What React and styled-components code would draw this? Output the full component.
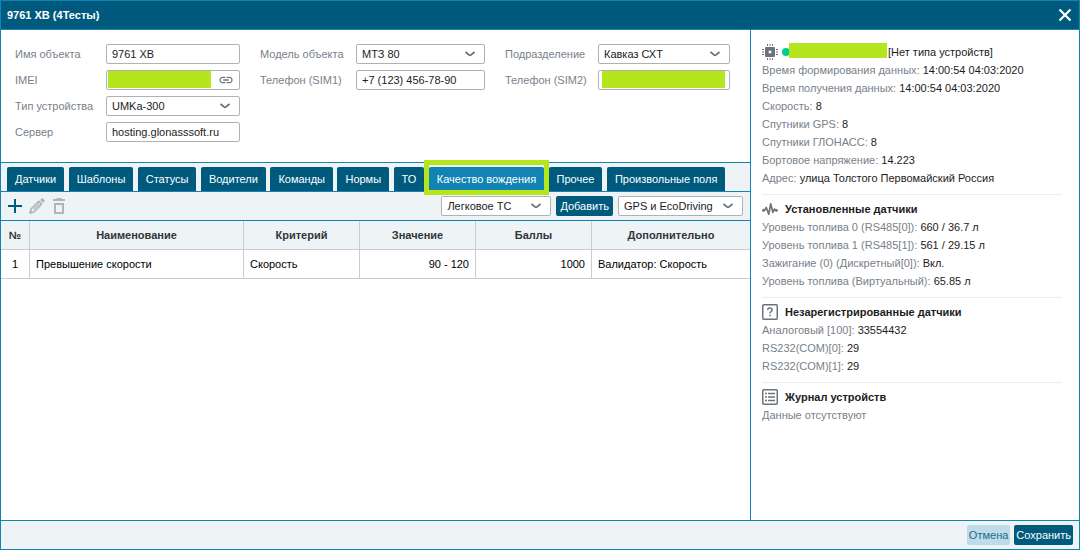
import React, { Fragment, useState } from "react"
import styled, { createGlobalStyle } from "styled-components"

const GlobalStyle = createGlobalStyle`
  * {
    box-sizing: border-box;
  }

  body {
    margin: 0;
    background: white;
    color: #1c1c1c;
    font-family: "Liberation Sans", Arial, sans-serif;
    font-size: 11px;
  }

  button,
  input,
  select {
    font: inherit;
    color: inherit;
  }
`

const Window = styled.div`
  display: flex;
  flex-direction: column;
  min-height: 100vh;
  border: 1px solid #1284b3;
`

const Header = styled.header`
  display: flex;
  align-items: center;
  justify-content: space-between;
  height: 29px;
  padding: 0 7px 0 6px;
  color: white;
  background: #005a7d;
  border-bottom: 1px solid #1284b3;
`

const Title = styled.h1`
  margin: 0;
  font-size: 11px;
  font-weight: bold;
`

const CloseButton = styled.button`
  display: flex;
  padding: 0;
  border: 0;
  background: none;
  color: white;
  cursor: pointer;
`

const Body = styled.div`
  display: flex;
  flex: 1;
`

const Main = styled.main`
  display: flex;
  flex-direction: column;
  flex: 1;
  min-width: 0;
`

const Form = styled.form`
  display: grid;
  grid-template-columns: 225fr 225fr 225fr;
  column-gap: 20px;
  padding: 14px 20px 20px 14px;
  border-bottom: 1px solid #1284b3;
`

const FormColumn = styled.div`
  display: flex;
  flex-direction: column;
  gap: 6px;
`

const FormRow = styled.div`
  display: flex;
  align-items: center;
`

const Label = styled.label`
  flex: none;
  width: ${props => props.$width}px;
  color: #78818a;
  white-space: nowrap;
`

const Field = styled.div`
  position: relative;
  display: flex;
  flex: ${props => (props.$width ? "none" : 1)};
  width: ${props => (props.$width ? props.$width + "px" : "auto")};
  min-width: 0;
  height: 20px;
  background: white;
  border: 1px solid #b1b1b3;
  border-radius: 2px;
`

const Input = styled.input`
  width: 100%;
  min-width: 0;
  padding: 0 5px;
  border: 0;
  outline: 0;
  background: none;
`

const Select = styled.select`
  width: 100%;
  padding: 0 22px 0 5px;
  border: 0;
  outline: 0;
  appearance: none;
  background: none;
`

const Chevron = styled.svg`
  position: absolute;
  top: 5px;
  right: 8px;
  pointer-events: none;
`

const LinkButton = styled.button`
  display: flex;
  align-items: center;
  flex: none;
  padding: 0 5px;
  border: 0;
  background: none;
  color: #6b747c;
  cursor: pointer;
`

const Mask = styled.span`
  position: absolute;
  top: 0;
  bottom: 1px;
  left: ${props => props.$left}px;
  right: ${props => props.$right}px;
  background: #b5e61d;
`

const Tabs = styled.ul`
  height: 29px;
  margin: 0;
  padding: 4px 6px 0;
  list-style: none;
  font-size: 16px;
  line-height: 24px;
  white-space: nowrap;
  background: #eef3f6;
  border-bottom: 1px solid #1284b3;
`

const TabItem = styled.li`
  display: inline-block;
  vertical-align: top;
`

const Tab = styled.button`
  position: relative;
  display: block;
  height: 24px;
  padding: 0 8px;
  border: 0;
  border-radius: 2px 2px 0 0;
  color: white;
  font-size: 11px;
  background: ${props => (props.$active ? "#1284b3" : "#005a7d")};
  cursor: pointer;

  &::after {
    content: "";
    display: ${props => (props.$active ? "block" : "none")};
    position: absolute;
    inset: -7px -5px -4px;
    border: 5px solid #b5e61d;
  }
`

const Toolbar = styled.div`
  display: flex;
  align-items: center;
  justify-content: space-between;
  height: 29px;
  padding: 0 7px 0 6px;
  background: #eef3f6;
  border-bottom: 1px solid #1284b3;
`

const ToolGroup = styled.div`
  display: flex;
  align-items: center;
  gap: ${props => props.$gap}px;
`

const IconButton = styled.button`
  display: flex;
  padding: 0;
  border: 0;
  background: none;
  color: ${props => (props.disabled ? "#b1b5b7" : "#005a7d")};
`

const Button = styled.button`
  height: 20px;
  padding: 0 ${props => (props.$wide ? 4 : 2)}px;
  border: 0;
  border-radius: 2px;
  color: ${props => (props.$light ? "#1d6d8f" : "white")};
  background: ${props => (props.$light ? "#bedbe7" : "#005a7d")};
  cursor: pointer;
`

const Table = styled.table`
  width: 100%;
  table-layout: fixed;
  border-collapse: separate;
  border-spacing: 0;

  th,
  td {
    height: 29px;
    padding: 0 6px;
    border-right: 1px solid #cbcccd;
    border-bottom: 1px solid #cbcccd;
  }

  th:last-child,
  td:last-child {
    border-right: 0;
  }

  th {
    color: #30363a;
    background: #eef3f6;
  }
`

const Col = styled.col`
  width: ${props => props.$width}px;
`

const Cell = styled.td`
  color: black;
  text-align: ${props => props.$align || "left"};
`

const Aside = styled.aside`
  flex: none;
  width: 329px;
  padding: 13px 17px 13px 11px;
  border-left: 1px solid #1284b3;
  line-height: 18px;
`

const Section = styled.section`
  & + & {
    margin-top: 7px;
    padding-top: 5px;
    border-top: 1px solid #ececec;
  }
`

const SectionTitle = styled.h2`
  display: flex;
  align-items: center;
  gap: 7px;
  height: 18px;
  margin: 0;
  font-size: 11px;
  font-weight: bold;
`

const Device = styled.div`
  display: flex;
  align-items: center;
  height: 18px;
`

const Status = styled.span`
  width: 8px;
  height: 8px;
  margin-left: 4px;
  border-radius: 50%;
  background: #00cf8b;
`

const DeviceName = styled.span`
  width: 98px;
  height: 15px;
  margin: 0 1px 3px -1px;
  background: #b5e61d;
`

const Line = styled.div`
  color: #78818a;

  b {
    color: #1c1c1c;
    font-weight: normal;
  }
`

const Footer = styled.footer`
  display: flex;
  align-items: center;
  justify-content: flex-end;
  gap: 4px;
  height: 29px;
  padding-right: 6px;
  background: #eef3f6;
  border-top: 1px solid #1284b3;
`

const ChevronIcon = () => (
  <Chevron width="12" height="8" viewBox="0 0 12 8" fill="none" stroke="#666f77" strokeWidth="1.7">
    <path d="M1.5 2 L5 4.9 Q6 5.7 7 4.9 L10.5 2" />
  </Chevron>
)

const LinkIcon = () => (
  <svg width="16" height="16" viewBox="0 0 24 24" fill="currentColor">
    <path d="M3.9 12c0-1.71 1.39-3.1 3.1-3.1h4V7H7c-2.76 0-5 2.24-5 5s2.24 5 5 5h4v-1.9H7c-1.71 0-3.1-1.39-3.1-3.1zM8 13h8v-2H8v2zm9-6h-4v1.9h4c1.71 0 3.1 1.39 3.1 3.1s-1.39 3.1-3.1 3.1h-4V17h4c2.76 0 5-2.24 5-5s-2.24-5-5-5z" />
  </svg>
)

const PlusIcon = () => (
  <svg width="16" height="16" viewBox="0 0 16 16" stroke="currentColor" strokeWidth="2">
    <path d="M8 1v14M1 8h14" />
  </svg>
)

const PencilIcon = () => (
  <svg width="16" height="16" viewBox="0 0 16 16" fill="none" stroke="currentColor" strokeWidth="1.7">
    <path d="M1.2 14.8 L2 11 L9.8 3.4 L12.6 6.2 L5 14 Z" strokeLinejoin="round" />
    <path d="M4.5 11.5 L10 6" strokeWidth="1.2" />
    <path d="M0.3 15.7 L1.4 11.8 L4.2 14.6 Z" fill="currentColor" stroke="none" />
    <path d="M11.2 2 L12.6 0.6 Q13.3 0 14 0.6 L15.4 2 Q16 2.7 15.4 3.4 L14 4.8 Z" fill="currentColor" stroke="none" />
  </svg>
)

const TrashIcon = () => (
  <svg width="16" height="16" viewBox="0 0 16 16" fill="none" stroke="currentColor" strokeWidth="2">
    <path d="M2 2h12" />
    <path d="M5.5 0.7h5" strokeWidth="1.4" />
    <path d="M4 6h8v9h-8z" />
  </svg>
)

const ChipIcon = () => (
  <svg width="16" height="16" viewBox="0 0 16 16" fill="none" stroke="#6b747c">
    <rect x="3" y="3" width="10" height="10" rx="1" fill="#6b747c" stroke="none" />
    <rect x="6.7" y="6.7" width="2.6" height="2.6" fill="white" stroke="none" />
    <path d="M5.5 0v2M8 0v2M10.5 0v2M5.5 14v2M8 14v2M10.5 14v2M0 5.5h2M0 8h2M0 10.5h2M14 5.5h2M14 8h2M14 10.5h2" />
  </svg>
)

const PulseIcon = () => (
  <svg width="16" height="14" viewBox="0 0 17 14" fill="none" stroke="#6b747c" strokeWidth="1.8" strokeLinejoin="round">
    <path d="M1 8.5H2.5L4.5 5.5L7.2 12.5L9.2 1.5L11.5 10.5L13.2 7L14.2 8.5H15.5" />
    <circle cx="1.4" cy="8.5" r="1.4" fill="#6b747c" stroke="none" />
    <circle cx="15.4" cy="8.5" r="1.5" fill="#6b747c" stroke="none" />
  </svg>
)

const QuestionIcon = () => (
  <svg width="16" height="16" viewBox="0 0 16 16" fill="none" stroke="#6b747c" strokeWidth="1.5">
    <rect x="0.75" y="0.75" width="14.5" height="14.5" rx="1" />
    <path d="M5.7 6V5.3Q5.9 4 8 4Q10.2 4 10.2 5.8Q10.2 6.8 9 7.6Q8 8.2 8 9.5M8 10.7v1.6" />
  </svg>
)

const JournalIcon = () => (
  <svg width="16" height="16" viewBox="0 0 16 16" fill="none" stroke="#6b747c" strokeWidth="1.5">
    <rect x="0.75" y="0.75" width="14.5" height="14.5" rx="1" />
    <path d="M3 4.5h2M6 4.5h7M3 8h2M6 8h7M3 11.5h2M6 11.5h7" />
  </svg>
)

const tabs = [
  "Датчики",
  "Шаблоны",
  "Статусы",
  "Водители",
  "Команды",
  "Нормы",
  "ТО",
  "Качество вождения",
  "Прочее",
  "Произвольные поля"
]

const telemetry = [
  ["Время формирования данных", "14:00:54 04:03:2020"],
  ["Время получения данных", "14:00:54 04:03:2020"],
  ["Скорость", "8"],
  ["Спутники GPS", "8"],
  ["Спутники ГЛОНАСС", "8"],
  ["Бортовое напряжение", "14.223"],
  ["Адрес", "улица Толстого Первомайский Россия"]
]

const sensors = [
  ["Уровень топлива 0 (RS485[0])", "660 / 36.7 л"],
  ["Уровень топлива 1 (RS485[1])", "561 / 29.15 л"],
  ["Зажигание (0) (Дискретный[0])", "Вкл."],
  ["Уровень топлива (Виртуальный)", "65.85 л"]
]

const unregistered = [
  ["Аналоговый [100]", "33554432"],
  ["RS232(COM)[0]", "29"],
  ["RS232(COM)[1]", "29"]
]

const TextRow = ({ id, label, labelWidth, value, children }) => (
  <FormRow>
    <Label htmlFor={id} $width={labelWidth}>
      {label}
    </Label>
    <Field>
      <Input id={id} defaultValue={value} />
      {children}
    </Field>
  </FormRow>
)

const SelectField = ({ value, width, ...rest }) => (
  <Field $width={width}>
    <Select {...rest}>
      <option>{value}</option>
    </Select>
    <ChevronIcon />
  </Field>
)

const SelectRow = ({ id, label, labelWidth, value }) => (
  <FormRow>
    <Label htmlFor={id} $width={labelWidth}>
      {label}
    </Label>
    <SelectField id={id} value={value} />
  </FormRow>
)

const Lines = ({ items }) =>
  items.map(([name, value]) => (
    <Line key={name}>
      {name}: <b>{value}</b>
    </Line>
  ))

function App() {
  const [activeTab, setActiveTab] = useState("Качество вождения")

  return (
    <Window>
      <GlobalStyle />
      <Header>
        <Title>9761 ХВ (4Тесты)</Title>
        <CloseButton aria-label="Закрыть">
          <svg width="14" height="14" viewBox="0 0 14 14" stroke="currentColor" strokeWidth="2.2">
            <path d="M1.5 1.5l11 11M12.5 1.5l-11 11" />
          </svg>
        </CloseButton>
      </Header>

      <Body>
        <Main>
          <Form>
            <FormColumn>
              <TextRow id="name" label="Имя объекта" labelWidth={91} value="9761 ХВ" />
              <TextRow id="imei" label="IMEI" labelWidth={91} value="">
                <Mask $left={1} $right={28} />
                <LinkButton type="button" aria-label="Ссылка">
                  <LinkIcon />
                </LinkButton>
              </TextRow>
              <SelectRow id="type" label="Тип устройства" labelWidth={91} value="UMKa-300" />
              <TextRow id="server" label="Сервер" labelWidth={91} value="hosting.glonasssoft.ru" />
            </FormColumn>
            <FormColumn>
              <SelectRow id="model" label="Модель объекта" labelWidth={96} value="МТЗ 80" />
              <TextRow id="sim1" label="Телефон (SIM1)" labelWidth={96} value="+7 (123) 456-78-90" />
            </FormColumn>
            <FormColumn>
              <SelectRow id="division" label="Подразделение" labelWidth={93} value="Кавказ СХТ" />
              <TextRow id="sim2" label="Телефон (SIM2)" labelWidth={93} value="">
                <Mask $left={3} $right={4} />
              </TextRow>
            </FormColumn>
          </Form>

          <Tabs>
            {tabs.map(tab => (
              <Fragment key={tab}>
                <TabItem>
                  <Tab $active={tab === activeTab} onClick={() => setActiveTab(tab)}>
                    {tab}
                  </Tab>
                </TabItem>{" "}
              </Fragment>
            ))}
          </Tabs>

          <Toolbar>
            <ToolGroup $gap={6}>
              <IconButton aria-label="Создать">
                <PlusIcon />
              </IconButton>
              <IconButton aria-label="Изменить" disabled>
                <PencilIcon />
              </IconButton>
              <IconButton aria-label="Удалить" disabled>
                <TrashIcon />
              </IconButton>
            </ToolGroup>
            <ToolGroup $gap={5}>
              <SelectField aria-label="Шаблон" value="Легковое ТС" width={110} />
              <Button $wide>Добавить</Button>
              <SelectField aria-label="Источник" value="GPS и EcoDriving" width={125} />
            </ToolGroup>
          </Toolbar>

          <Table>
            <colgroup>
              <Col $width={29} />
              <col />
              <Col $width={116} />
              <Col $width={116} />
              <Col $width={116} />
              <Col $width={158} />
            </colgroup>
            <thead>
              <tr>
                <th>№</th>
                <th>Наименование</th>
                <th>Критерий</th>
                <th>Значение</th>
                <th>Баллы</th>
                <th>Дополнительно</th>
              </tr>
            </thead>
            <tbody>
              <tr>
                <Cell $align="center">1</Cell>
                <Cell>Превышение скорости</Cell>
                <Cell>Скорость</Cell>
                <Cell $align="right">90 - 120</Cell>
                <Cell $align="right">1000</Cell>
                <Cell>Валидатор: Скорость</Cell>
              </tr>
            </tbody>
          </Table>
        </Main>

        <Aside>
          <Section>
            <Device>
              <ChipIcon />
              <Status />
              <DeviceName />
              [Нет типа устройств]
            </Device>
            <Lines items={telemetry} />
          </Section>
          <Section>
            <SectionTitle>
              <PulseIcon />
              Установленные датчики
            </SectionTitle>
            <Lines items={sensors} />
          </Section>
          <Section>
            <SectionTitle>
              <QuestionIcon />
              Незарегистрированные датчики
            </SectionTitle>
            <Lines items={unregistered} />
          </Section>
          <Section>
            <SectionTitle>
              <JournalIcon />
              Журнал устройств
            </SectionTitle>
            <Line>Данные отсутствуют</Line>
          </Section>
        </Aside>
      </Body>

      <Footer>
        <Button $light>Отмена</Button>
        <Button>Сохранить</Button>
      </Footer>
    </Window>
  )
}

export default App
